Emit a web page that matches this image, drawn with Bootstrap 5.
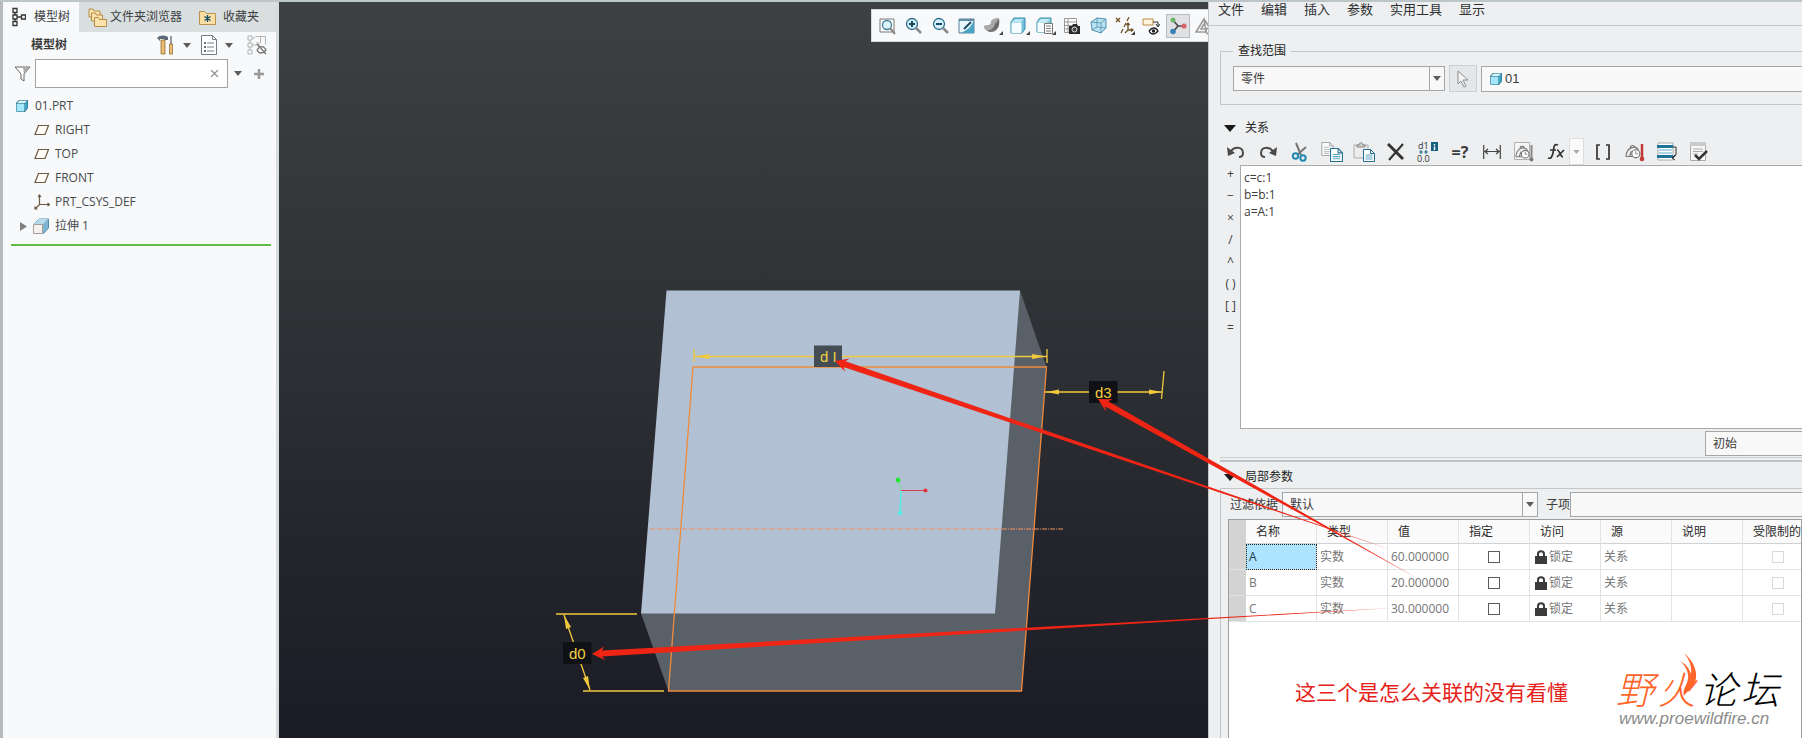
<!DOCTYPE html>
<html lang="zh-CN">
<head>
<meta charset="utf-8">
<meta name="viewport" content="width=device-width, initial-scale=1">
<title>01.PRT - 关系</title>
<link href="https://cdn.jsdelivr.net/npm/bootstrap@5.3.0/dist/css/bootstrap.min.css" rel="stylesheet">
<script src="https://cdn.jsdelivr.net/npm/bootstrap@5.3.0/dist/js/bootstrap.bundle.min.js" defer></script>
<style>
  body { font: 12px/16px "Open Sans", "Noto Sans CJK SC", sans-serif; color: #3c3c3c; background: #edeff0; }
  button { font: inherit; color: inherit; background: none; border: 0; padding: 0; }
  input, select, textarea { font: inherit; color: inherit; border-radius: 0; }
  svg { display: block; flex: none; }
  .app { border-top: 2px solid #bcc5c8; }

  /* model tree */
  .side { width: 279px; border-left: 3px solid #b7b9bb; border-right: 3px solid #d4dcde; background: #f7f9fb; }
  .side-tabs { height: 30px; background: #d9dfdf; }
  .side-tab { height: 30px; padding: 0 8px 0 9px; gap: 7px; color: #3c4043; text-decoration: none; }
  .side-tab.active { background: #f7f9fb; padding: 0 9px; gap: 8px; }
  .side-tab.folders { gap: 3px; }
  .side-head { height: 26px; padding: 0 9px 0 28px; }
  .side-head .caret { margin: 0 10px 0 8px; }
  .side-filter { height: 31px; padding: 0 10px 0 11px; }
  .filter-box { width: 193px; height: 29px; border: 1px solid #a2a2a2; background: #fff; margin: 0 6px 0 4px; }
  .filter-box input { border: 0; min-width: 0; outline: 0; background: none; }
  .tree { border-bottom: 2px solid #5fbb46; margin: 5px 5px 0 8px; padding: 0 0 6px 4px; color: #4a4a4a; }
  .tree li { height: 24px; gap: 6px; }
  .tree .kid { padding-left: 19px; gap: 5px; }
  .tree .open { padding-left: 5px; }

  /* graphics area */
  .stage { background: linear-gradient(#3e4142, #2c2f33 50%, #1b1b25); min-width: 0; }
  .view-bar { top: 7px; right: 0; width: 337px; height: 33px; background: #f8f9fa; border: 1px solid #d6d9dc; border-right: 0; }
  .view-row { width: 343px; padding-left: 5px; }
  .view-row button { width: 22px; height: 22px; display: grid; place-items: center; flex: none; }
  .view-row .on { background: #dfe1e3; outline: 1px solid #b9bcbf; }

  /* relations window */
  .rel { width: 594px; border-left: 1px solid #c4c7c9; background: #edeff0; }
  .menu-row { height: 24px; padding: 0 9px 9px; gap: 17px; border-bottom: 1px solid #c3c6c8; font-size: 13px; }
  .menu-row a { color: #2d2f31; text-decoration: none; }
  .scope { border: 1px solid #c3c6c8; border-right: 0; margin: 17px 0 0 11px; padding: 0 0 12px 12px; }
  .scope legend { font-size: 12px; line-height: 16px; width: auto; float: none; margin: 0 0 6px; padding: 0 5px; color: #222; }
  .pick { height: 25px; border: 1px solid #a4a6a8; background: #f8f8f8; padding: 0 7px; appearance: none; outline: 0; }
  .pick-wrap { position: relative; }
  .pick-wrap::after { content: ""; position: absolute; right: 0; top: 0; bottom: 0; width: 16px; border-left: 1px solid #a4a6a8; pointer-events: none; }
  .pick-wrap svg { position: absolute; right: 4px; top: 10px; pointer-events: none; }
  .type-pick { width: 212px; }
  .by-pick { width: 256px; }
  .cursor-btn { width: 28px; height: 27px; border: 1px solid #cdd0d2; background: #e4e6e7; }
  .ref-box { height: 26px; border: 1px solid #a4a6a8; border-right: 0; background: #f9f9f9; padding-left: 7px; gap: 2px; }
  .ref-box input { border: 0; background: none; outline: 0; padding: 0; min-width: 0; font-family: "Liberation Sans", sans-serif; font-size: 13px; }
  .sec-head { height: 16px; gap: 9px; padding-left: 15px; color: #222; }
  .sec-rel { margin: 15px 0 2px; }
  .sec-local { margin: 7px 0 3px; }
  .rel-tools { height: 27px; padding-left: 15px; gap: 8px; }
  .rel-tools button { width: 24px; height: 24px; display: grid; place-items: center; flex: none; }
  .rel-tools .drop { width: 15px; height: 27px; background: #fafafa; border: 1px solid #dcdedf; margin: 0 -1px 0 -7px; }
  .ops { width: 31px; padding: 0 0 0 12px; }
  .ops button { height: 22px; line-height: 18px; padding-bottom: 4px; text-align: center; font-size: 12px; }
  .code { height: 264px; border: 1px solid #a8aaac; border-right: 0; resize: none; outline: 0; background: #fff; padding: 3px; line-height: 17px; }
  .init-row { padding: 2px 0 1px; }
  .init-row .pick { width: 97px; border-right: 0; }
  .split { height: 5px; border-top: 1px solid #cdd0d2; border-bottom: 2px solid #bfc2c4; margin-left: 11px; }
  .local { border-top: 1px solid #c3c6c8; border-left: 1px solid #c3c6c8; margin-left: 11px; padding: 3px 0 0 9px; }
  .param-box { border: 1px solid #9b9d9f; border-bottom: 0; background: #fff; margin: 2px 0 0 -2px; }
  .params { table-layout: fixed; width: 585px; border-collapse: separate; border-spacing: 0; color: #757575; white-space: nowrap; }
  .params th, .params td { height: 26px; padding: 0 0 0 3px; border-right: 1px solid #e2e5e6; border-bottom: 1px solid #e0e3e4; font-weight: 400; }
  .params thead th { height: 24px; padding: 0 0 0 10px; background: #fafafa; color: #2b2b2b; border-bottom-color: #d0d3d5; }
  .params .gut { background: #d3d3d3; padding: 0; border-right: 0; width: 17px; }
  .params .sel { background: #aee3ff; color: #1f3a48; outline: 1px dotted #222; outline-offset: -1px; }
  .params .mid { text-align: center; padding: 0; }
  .params .lock { gap: 2px; padding-left: 2px; }
  .params input { appearance: none; width: 12px; height: 12px; border: 1px solid #5c5c5c; margin: 0; vertical-align: middle; background: #fff; }
  .params input:disabled { border-color: #d9d9d9; }
  .note { color: #e5211a; font-size: 21px; line-height: 30px; font-family: "Noto Sans CJK SC", sans-serif; margin: 0; }
  .foot { padding: 30px 22px 0 66px; }
  .brand-logo { position: relative; font: italic 300 38px/40px "Noto Sans CJK SC", sans-serif; color: #000; width: 163px; }
  .brand-logo .hot { color: #ff6428; }
  .brand-logo svg { position: absolute; left: 61px; top: -15px; }
  .site { font: italic 17px/22px "Liberation Sans", sans-serif; color: #8b8b8b; text-decoration: none; padding-left: 3px; }
  .marks { left: 0; top: 0; width: 100%; pointer-events: none; }
</style>
</head>
<body>
<svg width="0" height="0" class="position-absolute" aria-hidden="true">
  <defs>
    <symbol id="i-cube" viewBox="0 0 14 14"><path d="M1 4 4 1h9v8l-3 4H2L1 12z" fill="#1d5f78"/><path d="M1.500 4.500h8v8h-8z" fill="#a5e8fb"/><path d="m2 4 2.500-2.500h8L10 4z" fill="#d3f6ff"/><path d="M10 4.500 12.500 2v7L10 12z" fill="#3fa9c9"/></symbol>
    <symbol id="i-plane" viewBox="0 0 16 12"><path d="M4.500 1.500h10l-3.500 9H1z" fill="#fffdf7" stroke="#6d5940" stroke-width="1.200"/></symbol>
    <symbol id="i-down" viewBox="0 0 8 5"><path d="M0 0h8L4 5z" fill="#5d5d5d"/></symbol>
    <symbol id="i-lock" viewBox="0 0 12 14"><path d="M3 7V4C3 .300 9 .300 9 4v3" fill="none" stroke="#3b3b3b" stroke-width="2"/><path d="M0 6h12v8H0z" fill="#3b3b3b"/></symbol>
    <symbol id="i-tri" viewBox="0 0 12 7"><path d="M0 0h12L6 7z" fill="#1a1a1a"/></symbol>
    <symbol id="i-sheet" viewBox="0 0 14 16"><path d="M.5.500h9l4 4v11H.5z" fill="#fafbfb" stroke="#9b9b9b"/><path d="M9.500.500v4h4" fill="none" stroke="#9b9b9b"/><path d="M3 6h6M3 8.500h8M3 11h8M3 13h6" stroke="#b5b5b5"/></symbol>
    <symbol id="i-sheetb" viewBox="0 0 12 13"><path d="M.5.500h7l4 4v8H.5z" fill="#fff" stroke="#246f91"/><path d="M7.500.500v4h4" fill="none" stroke="#246f91"/><path d="M2.500 6h7M2.500 8h7M2.500 10h7" stroke="#60a6c2"/></symbol>
    <symbol id="i-gauge" viewBox="0 0 20 20"><path d="M1 15C2 4 12 2 15 8M5 15l2-6M6 5c0-3 5-3 5 0M1 15h7" fill="none" stroke="#777" stroke-width="1.300"/><circle cx="12" cy="12" r="4.500" fill="#fff" stroke="#777" stroke-width="1.300"/><path d="M12 9v3h2.500" fill="none" stroke="#777"/></symbol>
  </defs>
</svg>

<div class="app d-flex vh-100 position-relative overflow-hidden">
  <aside class="side flex-shrink-0">
    <nav class="side-tabs d-flex">
      <a href="#tree" class="side-tab active d-flex align-items-center">
        <svg width="14" height="20" viewBox="0 0 14 20" fill="none" stroke="#333" stroke-width="1.300"><path d="M1 1.500h4v4H1zM1 8h4v4H1zM1 14.500h4v4H1zM9.500 8h4v4h-4zM5 10h4.500M3 5.500V8M3 12v2.500"/></svg>模型树</a>
      <a href="#folders" class="side-tab folders d-flex align-items-center">
        <svg width="19" height="19" viewBox="0 0 19 19" fill="#fbe3ae" stroke="#b98c45"><path d="M1 1h4l1 2h6v6H1z"/><path d="M3.500 5h4l1 2h6v6h-11z"/><path d="M6.500 9.500h4l1 2h7v7h-12z"/></svg>文件夹浏览器</a>
      <a href="#favorites" class="side-tab d-flex align-items-center">
        <svg width="17" height="16" viewBox="0 0 17 16"><path d="M.5 2.500h5l2 2h9v11H.5z" fill="#f9dfa3" stroke="#ba9150"/><path d="M8.500 6v7M5.500 7.500l6 4M11.500 7.500l-6 4" stroke="#154b64" stroke-width="1.300"/></svg>收藏夹</a>
    </nav>
    <div class="side-head d-flex align-items-center">
      <strong class="fw-bold me-auto">模型树</strong>
      <button aria-label="设置"><svg width="18" height="20" viewBox="0 0 18 20"><path d="M0 3c3-3 7-3 11-1v3H7V4H3v2z" fill="#5c6b76"/><path d="M4 5h4v14H4z" fill="#e8bd72" stroke="#8d5e20" stroke-width=".7"/><path d="M14 1v9" stroke="#6c7a86" stroke-width="1.500"/><path d="M12.500 9h3v10h-3z" fill="#e9c27a" stroke="#8d5e20" stroke-width=".7"/></svg></button>
      <svg class="caret" width="8" height="5"><use href="#i-down"/></svg>
      <button aria-label="显示"><svg width="16" height="20" viewBox="0 0 16 20"><path d="M.5.500h11l4 4v15H.5z" fill="#fff" stroke="#737c86"/><path d="M11.500.500v4h4M6 8h7M6 12h7M6 16h7" fill="none" stroke="#76808a"/><path d="M3 7h2v2H3zM3 11h2v2H3zM3 15h2v2H3z" fill="#66727e"/></svg></button>
      <svg class="caret" width="8" height="5"><use href="#i-down"/></svg>
      <button class="ms-1" aria-label="隐藏项"><svg width="20" height="20" viewBox="0 0 20 20" fill="none" stroke="#b4b4b4"><path d="M1 1h4v4H1zM1 8h4v4H1zM1 15h4v4H1zM5 10h5M8.500 1.500h10v8M13.500 1v7M5 3h3M3 5v3M3 12v3M9 8h3v4"/><path d="M10 15c3-5 7-4 9 0-3 4-7 4-9 0M10 9l9 10" stroke="#777" stroke-width="1.300"/></svg></button>
    </div>
    <div class="side-filter d-flex align-items-center">
      <svg width="17" height="16" viewBox="0 0 17 16"><path d="M1 1h15l-6 7v7l-3-2V8z" fill="#fff" stroke="#666"/><path d="m10 8 5-6.500H9z" fill="#aaa"/></svg>
      <div class="filter-box d-flex align-items-center">
        <input type="text" class="flex-grow-1" aria-label="过滤">
        <button class="me-1 pe-1" aria-label="清除"><svg width="9" height="9" viewBox="0 0 8 8"><path d="m1 1 6 6M7 1 1 7" stroke="#8a8a8a" stroke-width="1.200"/></svg></button>
      </div>
      <svg width="8" height="5"><use href="#i-down"/></svg>
      <button class="ms-auto" aria-label="添加"><svg width="14" height="12" viewBox="0 0 14 12"><path d="M7 1v10M2 6h10" stroke="#9a9a9a" stroke-width="2.600"/></svg></button>
    </div>
    <ul class="tree list-unstyled" id="tree">
      <li class="d-flex align-items-center"><svg width="14" height="14"><use href="#i-cube"/></svg>01.PRT</li>
      <li class="kid d-flex align-items-center"><svg width="16" height="12"><use href="#i-plane"/></svg>RIGHT</li>
      <li class="kid d-flex align-items-center"><svg width="16" height="12"><use href="#i-plane"/></svg>TOP</li>
      <li class="kid d-flex align-items-center"><svg width="16" height="12"><use href="#i-plane"/></svg>FRONT</li>
      <li class="kid d-flex align-items-center"><svg width="16" height="16" viewBox="0 0 16 16" fill="none" stroke="#6d5940" stroke-width="1.200"><path d="M5.500 1v9.500h10M5.500 10.500 1 15M4 3l1.500-2L7 3M13.500 9l2 1.500-2 1.500M1 12.500V15h2.500"/></svg>PRT_CSYS_DEF</li>
      <li class="open d-flex align-items-center"><svg width="7" height="9" viewBox="0 0 7 9"><path d="M0 0v9l7-4.500z" fill="#808080"/></svg><svg width="16" height="16" viewBox="0 0 16 16"><path d="m1 6 5-5h9.500v9l-5 5.500z" fill="#7fb5d2" stroke="#5790ae"/><path d="m1 6 5-5h9l-5 5z" fill="#b7dbea"/><path d="M.5 6.500h9v9h-9z" fill="#f4f2f0" stroke="#a59d99"/></svg>拉伸 1</li>
    </ul>
  </aside>

  <main class="stage flex-grow-1 position-relative overflow-hidden">
    <svg class="w-100" viewBox="279 2 929 736" role="img" aria-label="模型">
      <path d="M1020 290.500 1046.500 367 1021.500 691H668.500L641 613.500z" fill="#596068"/>
      <path d="M666.500 290.500H1020L995 613.500H641z" fill="#b1c0d2"/>
      <path d="M693 367h353.500L1021.500 691h-353z" fill="none" stroke="#f08a3c" stroke-width="1.300"/>
      <path d="M650 529h414" stroke="#f09060" stroke-dasharray="5 1 1 1"/>
      <g stroke="#f1c93c" stroke-width="1.300" fill="#f1c93c">
        <path d="M694 349v13M1047 349v14M694 356.500h353M1045 392h117M1164 371l-2.500 28M556 614h81M583 691h81M564 615l26 75"/>
        <path stroke="none" d="m695 356.500 14-2.500v5zM1046 356.500l-14-2.500v5zM1046 392l13-2.500v5zM1162 392l-13-2.500v5zM564 615l2 14 5-2zM590 690l-7-12 5-2z"/>
      </g>
      <path d="M814 345.500h28V367h-28z" fill="#454d54"/>
      <path d="M1089 381h28.500v22H1089zM563 642h28.500v22H563z" fill="#101114"/>
      <g fill="#f1cf45" font-family="Liberation Sans, sans-serif" font-size="15"><text x="820" y="362">d I</text><text x="1095" y="398">d3</text><text x="569" y="659">d0</text></g>
      <path d="M901 490.500h23" stroke="#d8404a"/><circle cx="925.500" cy="490.500" r="2" fill="#e23038"/>
      <path d="m898 480 3 10" stroke="#7dde9c"/><circle cx="898" cy="480" r="2.500" fill="#29e33b"/>
      <path d="m901 491-1 22" stroke="#55ebe9" stroke-width="1.500"/><circle cx="900" cy="513" r="2.300" fill="#55ebe9"/>
    </svg>

    <div class="view-bar position-absolute overflow-hidden d-flex align-items-center">
      <div class="view-row d-flex justify-content-between flex-shrink-0">
        <button aria-label="重新调整"><svg width="18" height="18" viewBox="0 0 18 18"><path d="M1 2h14v13H1z" fill="#fff" stroke="#777"/><circle cx="8" cy="8" r="4.500" fill="#dff4fb" stroke="#3b7f9d" stroke-width="1.300"/><path d="m11 11 5 6" stroke="#888" stroke-width="2"/></svg></button>
        <button aria-label="放大"><svg width="18" height="18" viewBox="0 0 18 18"><circle cx="7" cy="7" r="5.500" fill="#d5f0fa" stroke="#2f6f8e" stroke-width="1.300"/><path d="M4 7h6M7 4v6" stroke="#154b64" stroke-width="2"/><path d="m11 11 5 5" stroke="#888" stroke-width="2.500"/></svg></button>
        <button aria-label="缩小"><svg width="18" height="18" viewBox="0 0 18 18"><circle cx="7" cy="7" r="5.500" fill="#d5f0fa" stroke="#2f6f8e" stroke-width="1.300"/><path d="M4 7h6" stroke="#154b64" stroke-width="2"/><path d="m11 11 5 5" stroke="#888" stroke-width="2.500"/></svg></button>
        <button aria-label="重画"><svg width="18" height="18" viewBox="0 0 18 18"><path d="M1 2h15v14H1z" fill="#e9f6fa" stroke="#5b8499"/><path d="M16 3v13H2C9 14 13 10 16 3" fill="#4aa3c0"/><path d="M1 2h15v2H1z" fill="#5d8ea5"/><path d="m6 12 7-7" stroke="#17455b" stroke-width="1.800"/></svg></button>
        <button aria-label="渲染"><svg width="20" height="18" viewBox="0 0 20 18"><path d="M1 9c2-2 4 1 7-3-1-3 3-5 8-5 1 6-1 11-6 12S1 14 1 9" fill="#a9a9a9"/><path d="M3 13c5 1 8-2 9-6l4-5c1 7-1 10-4 12s-7 1-9-1" fill="#5a5a5a" opacity=".8"/><path d="M20 14v4h-4z" fill="#444"/></svg></button>
        <button aria-label="显示样式"><svg width="20" height="18" viewBox="0 0 20 18"><path d="m1 5 3-4h11v11l-3 4H1z" fill="#73bfd8" stroke="#398ca8"/><path d="M1.500 5.500h10V16h-10z" fill="#f4fdff"/><path d="m2 5 3-3h9l-3 3z" fill="#b8e8f5"/><path d="M20 14v4h-4z" fill="#444"/></svg></button>
        <button aria-label="已保存方向"><svg width="20" height="18" viewBox="0 0 20 18"><path d="m1 5 3-4h11v11l-3 3H1z" fill="#8accdf" stroke="#398ca8"/><path d="M1.500 5.500h10V15h-10z" fill="#f4fdff"/><path d="m2 5 3-3h9l-3 3z" fill="#c5edf7"/><path d="M8.500 6.500h8v10h-8z" fill="#fff" stroke="#777"/><path d="M10 9h5M10 11.500h5M10 14h5" stroke="#777"/><path d="M20 14v4h-4z" fill="#444"/></svg></button>
        <button aria-label="视图管理器"><svg width="18" height="18" viewBox="0 0 18 18"><path d="M1.500 1.500h12v14h-12zM1.500 5h12M1.500 8.500h12M1.500 12h12M5 1v15" fill="#fff" stroke="#999"/><path d="M6 9h3l1-2h4l1 2h2v8H6z" fill="#2b2b2b"/><circle cx="11.500" cy="12.500" r="2.500" fill="#444" stroke="#ddd"/></svg></button>
        <button aria-label="透视图"><svg width="18" height="18" viewBox="0 0 18 18" fill="#b9e1ef" stroke="#5091b0"><path d="m1 5 6-4 9 1v9l-5 5-9-3z"/><path d="m1 5 10 1 5-4M11 6v10M7 1v9l9 1M7 10l-5 3" fill="none" stroke-width=".8"/></svg></button>
        <button aria-label="基准显示"><svg width="20" height="18" viewBox="0 0 20 18" fill="none" stroke="#6f5228" stroke-width="1.300"><path d="m1 1 4 4M5 1 1 5M14 0l-2 4M11 6l-2 4M8 12l-2 4M13 6v7h5M13 13l-3 3M11.500 8 13 6l1.500 2M16 11.500l2 1.500-2 1.500"/><path d="M20 14v4h-4z" fill="#444" stroke="none"/></svg></button>
        <button aria-label="注释显示"><svg width="18" height="18" viewBox="0 0 18 18"><path d="M1 2h10v6H1z" fill="#fff5df" stroke="#b38a48"/><path d="M11 5h5v4M14 7l2 3 2-3" fill="none" stroke="#333"/><path d="M7 14c3-4 7-4 9 0-3 4-7 4-9 0" fill="#fff" stroke="#222" stroke-width="1.300"/><circle cx="11.500" cy="14" r="1.700" fill="#222"/></svg></button>
        <button class="on" aria-label="旋转中心"><svg width="18" height="18" viewBox="0 0 18 18"><path d="m4 3 5 6-5 6M9 9h6" fill="none" stroke="#444" stroke-width="1.600"/><circle cx="4" cy="3" r="2.500" fill="#6eb56c"/><circle cx="4" cy="14.500" r="2.800" fill="#3a83b5"/><circle cx="15" cy="9" r="2.600" fill="#d9656b"/></svg></button>
        <button aria-label="仿真"><svg width="18" height="18" viewBox="0 0 18 18" fill="none" stroke="#9b9b9b" stroke-width="1.600"><path d="M9 2 1 15h10zM9 2l6 9M9 7l-3 5h5"/><circle cx="14" cy="14" r="3"/></svg></button>
      </div>
    </div>
  </main>

  <section class="rel flex-shrink-0 d-flex flex-column">
    <nav class="menu-row d-flex align-items-center">
      <a href="#file">文件</a><a href="#edit">编辑</a><a href="#insert">插入</a><a href="#param">参数</a><a href="#tools">实用工具</a><a href="#show">显示</a>
    </nav>
    <fieldset class="scope">
      <legend>查找范围</legend>
      <div class="d-flex align-items-center gap-1">
        <div class="pick-wrap"><select class="pick type-pick" aria-label="对象类型"><option>零件</option></select><svg width="8" height="5"><use href="#i-down"/></svg></div>
        <button class="cursor-btn d-grid justify-content-center align-items-center" aria-label="选择"><svg width="12" height="18" viewBox="0 0 12 18"><path d="M1 1v13l3-3 3 6 2-1-3-6h5z" fill="#f4f4f4" stroke="#8b8f93"/></svg></button>
        <div class="ref-box d-flex align-items-center flex-grow-1"><svg width="14" height="14"><use href="#i-cube"/></svg><input class="flex-grow-1" value="01" aria-label="对象"></div>
      </div>
    </fieldset>

    <div class="sec-head sec-rel d-flex align-items-center"><svg width="12" height="7"><use href="#i-tri"/></svg>关系</div>
    <div class="rel-tools d-flex align-items-center">
      <button aria-label="撤消"><svg width="20" height="16" viewBox="0 0 20 16"><path d="M4 9c3-7 13-7 13 0 0 3-2 4-4 4" fill="none" stroke="#4a4a4a" stroke-width="2"/><path d="m1 3 1 9 7-3z" fill="#4a4a4a"/></svg></button>
      <button aria-label="重做"><svg width="20" height="16" viewBox="0 0 20 16"><path d="M16 9C13 2 3 2 3 9c0 3 2 4 4 4" fill="none" stroke="#4a4a4a" stroke-width="2"/><path d="m19 3-1 9-7-3z" fill="#4a4a4a"/></svg></button>
      <button aria-label="剪切"><svg width="18" height="20" viewBox="0 0 18 20"><path d="m5 1 5 12M15 5 6 13" stroke="#777" stroke-width="2"/><circle cx="4.500" cy="14" r="2.700" fill="none" stroke="#2389b4" stroke-width="2"/><circle cx="12" cy="16" r="2.700" fill="none" stroke="#2389b4" stroke-width="2"/></svg></button>
      <button aria-label="复制"><svg width="22" height="20" viewBox="0 0 22 20"><use href="#i-sheet" width="13" height="14"/><use href="#i-sheetb" x="9" y="6" width="13" height="14"/></svg></button>
      <button aria-label="粘贴"><svg width="22" height="20" viewBox="0 0 22 20"><path d="M1 3h14v13H1z" fill="#ececec" stroke="#aaa"/><path d="M4 5V3h2c0-3 4-3 4 0h2v2z" fill="#ccc" stroke="#888"/><use href="#i-sheetb" x="10" y="7" width="12" height="13"/></svg></button>
      <button aria-label="删除"><svg width="18" height="18" viewBox="0 0 18 18"><path d="m1 1 15 15" stroke="#333" stroke-width="3"/><path d="M16 1 2 17" stroke="#333" stroke-width="2"/></svg></button>
      <button aria-label="切换尺寸"><svg width="22" height="22" viewBox="0 0 22 22"><path d="M14 1h7v9h-7z" fill="#15607f"/><path d="M17.500 3v1.500M17.500 5.500V9" stroke="#fff" stroke-width="1.500"/><path d="M4 9v4M2 11h4M9 9v4M7 11h4" stroke="#2d7390" stroke-width="1.200"/><text x="1" y="8" font-size="9" fill="#333">d1</text><text x="0" y="21" font-size="9" fill="#333">0.0</text></svg></button>
      <button class="fw-bold fs-6" aria-label="计算">=?</button>
      <button aria-label="尺寸"><svg width="18" height="16" viewBox="0 0 18 16" fill="none" stroke="#444" stroke-width="1.200"><path d="M.700 1v14M17.300 1v14M2 7.500h14M5 5 2 7.500 5 10M13 5l3 2.500-3 2.500"/></svg></button>
      <button aria-label="单位"><svg width="20" height="20" viewBox="0 0 20 20"><path d="M.5.500h15v17H.5z" fill="#f5f5f5" stroke="#b0b0b0"/><use href="#i-gauge" x="1" y="2" width="17" height="17"/><path d="M17.500 3v14" stroke="#888" stroke-width="2"/><circle cx="17.500" cy="17.500" r="2" fill="#777"/></svg></button>
      <button aria-label="函数"><svg width="18" height="18" viewBox="0 0 18 18" fill="none" stroke="#333" stroke-width="1.700"><path d="M11 2c-5-2-4 4-5 8s-2 6-5 5M3 7h6M10 7c3 0 3 7 6 7M17 7l-7 7"/></svg></button>
      <button class="drop" aria-label="更多函数"><svg width="7" height="4" viewBox="0 0 8 5"><path d="M0 0h8L4 5z" fill="#aaa"/></svg></button>
      <button aria-label="参数"><svg width="16" height="16" viewBox="0 0 16 16" fill="none" stroke="#333" stroke-width="1.700"><path d="M5 1H2v14h3M11 1h3v14h-3"/></svg></button>
      <button aria-label="单位检查"><svg width="20" height="20" viewBox="0 0 20 20"><use href="#i-gauge" x="0" y="1" width="18" height="18"/><path d="M17 2v14" stroke="#c23a35" stroke-width="2.500"/><circle cx="17" cy="17" r="2.300" fill="#c23a35"/></svg></button>
      <button aria-label="排序"><svg width="20" height="20" viewBox="0 0 20 20"><path d="M1 1h15v17H1z" fill="#fff" stroke="#aaa"/><path d="M0 3h16v3H0zM0 13h16v3H0z" fill="#1c7499"/><path d="M2 8h13M2 11h13" stroke="#5cacc8"/><path d="M16 5h3v8l-3 3M18 13l-3 3 3 2" fill="none" stroke="#333"/></svg></button>
      <button aria-label="校验"><svg width="20" height="20" viewBox="0 0 20 20"><path d="M1.500.500h15v18h-15z" fill="#f7f7f7" stroke="#aaa"/><path d="M1 0h16v4H1z" fill="#c8cacc"/><path d="M4 7h10M4 9.500h10M4 12h5" stroke="#aaa"/><path d="m6 13 4 4 8-8" fill="none" stroke="#333" stroke-width="2.500"/></svg></button>
    </div>
    <div class="d-flex">
      <div class="ops d-flex flex-column">
        <button>+</button><button>−</button><button>×</button><button>/</button><button>^</button><button>( )</button><button>[ ]</button><button>=</button>
      </div>
      <textarea class="code flex-grow-1" aria-label="关系" spellcheck="false">c=c:1
b=b:1
a=A:1</textarea>
    </div>
    <div class="init-row d-flex justify-content-end"><select class="pick" aria-label="关系类型"><option>初始</option></select></div>
    <div class="split"></div>
    <div class="sec-head sec-local d-flex align-items-center"><svg width="12" height="7"><use href="#i-tri"/></svg>局部参数</div>
    <div class="local flex-grow-1 d-flex flex-column">
      <div class="d-flex align-items-center">
        <label for="by" class="me-1">过滤依据</label>
        <div class="pick-wrap"><select class="pick by-pick" id="by"><option>默认</option></select><svg width="8" height="5"><use href="#i-down"/></svg></div>
        <label for="sub" class="ms-2">子项</label>
        <input class="pick flex-grow-1 border-end-0" id="sub">
      </div>
      <div class="param-box flex-grow-1 overflow-hidden">
        <table class="params">
          <thead><tr><th class="gut"></th><th>名称</th><th>类型</th><th>值</th><th>指定</th><th>访问</th><th>源</th><th>说明</th><th>受限制的</th></tr></thead>
          <tbody>
            <tr><td class="gut"></td><td class="sel">A</td><td>实数</td><td>60.000000</td><td class="mid"><input type="checkbox" aria-label="指定 A"></td><td><span class="lock d-flex align-items-center"><svg width="12" height="14"><use href="#i-lock"/></svg>锁定</span></td><td>关系</td><td></td><td class="mid"><input type="checkbox" disabled aria-label="受限制的 A"></td></tr>
            <tr><td class="gut"></td><td>B</td><td>实数</td><td>20.000000</td><td class="mid"><input type="checkbox" aria-label="指定 B"></td><td><span class="lock d-flex align-items-center"><svg width="12" height="14"><use href="#i-lock"/></svg>锁定</span></td><td>关系</td><td></td><td class="mid"><input type="checkbox" disabled aria-label="受限制的 B"></td></tr>
            <tr><td class="gut"></td><td>C</td><td>实数</td><td>30.000000</td><td class="mid"><input type="checkbox" aria-label="指定 C"></td><td><span class="lock d-flex align-items-center"><svg width="12" height="14"><use href="#i-lock"/></svg>锁定</span></td><td>关系</td><td></td><td class="mid"><input type="checkbox" disabled aria-label="受限制的 C"></td></tr>
          </tbody>
        </table>
        <div class="foot d-flex justify-content-between align-items-center">
          <p class="note">这三个是怎么关联的没有看懂</p>
          <div class="mt-3">
            <div class="brand-logo d-flex justify-content-between"><span class="hot">野</span><span class="hot">火</span><span>论</span><span>坛</span>
              <svg width="20" height="44" viewBox="0 0 20 44"><path d="M7 0C18 9 22 22 17 31c-3 6-8 8-10 12-2-6 3-11 4-17C12 20 9 13 3 8c6 3 9 7 11 13C15 13 12 6 7 0" fill="#ff6428"/></svg>
            </div>
            <a class="site" href="http://www.proewildfire.cn">www.proewildfire.cn</a>
          </div>
        </div>
      </div>
    </div>
  </section>

  <!-- pointers from the parameter values to their dimensions -->
  <svg class="marks position-absolute" viewBox="0 2 1802 736" fill="#ee2414" aria-hidden="true">
    <path transform="translate(835 361) rotate(18.740)" d="m0 0 13-7-3 4L588 0 10 3l3 4z"/>
    <path transform="translate(1098 399) rotate(29.300)" d="m0 0 13-7-3 4L364 0 10 3l3 4z"/>
    <path transform="translate(592 654) rotate(-3.290)" d="m0 0 13-7-3 4L802 0 10 3l3 4z"/>
  </svg>
</div>
</body>
</html>
